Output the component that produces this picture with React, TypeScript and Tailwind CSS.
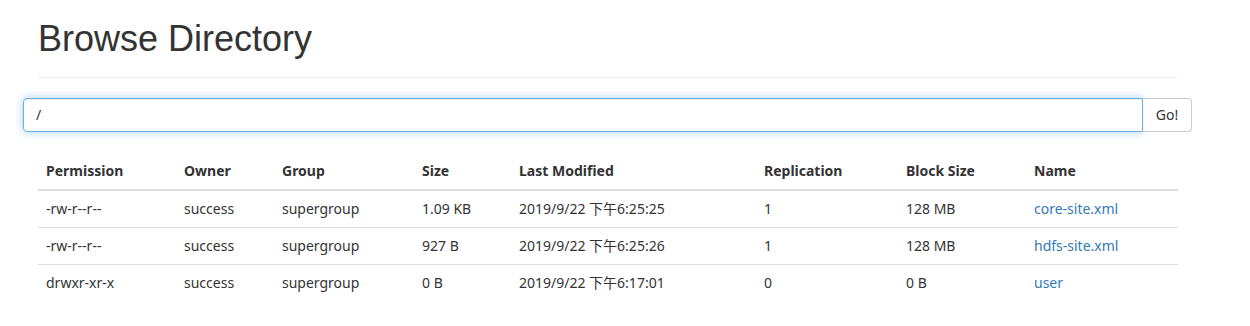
import React from "react";

const cols = [
  { h: "Permission", w: 138 },
  { h: "Owner", w: 98 },
  { h: "Group", w: 140 },
  { h: "Size", w: 97 },
  { h: "Last Modified", w: 245 },
  { h: "Replication", w: 142 },
  { h: "Block Size", w: 128 },
  { h: "Name", w: 152 },
];

const rows = [
  ["-rw-r--r--", "success", "supergroup", "1.09 KB", "2019/9/22 下午6:25:25", "1", "128 MB", "core-site.xml"],
  ["-rw-r--r--", "success", "supergroup", "927 B", "2019/9/22 下午6:25:26", "1", "128 MB", "hdfs-site.xml"],
  ["drwxr-xr-x", "success", "supergroup", "0 B", "2019/9/22 下午6:17:01", "0", "0 B", "user"],
];

const bodyFont = { fontFamily: '"Noto Sans", "Noto Sans CJK SC", sans-serif' };

export default function App() {
  return (
    <div className="w-[1250px] h-[326px] bg-white text-[#333] overflow-hidden" style={bodyFont}>
      <div className="pl-[23px] pr-[58px]">
        <div className="px-[15px]">
          <div className="pt-[19px] pb-[18px] border-b border-[#eee] mb-[20px]">
            <h1
              className="text-[36px] leading-[39.6px] font-normal text-[#333]"
              style={{ fontFamily: '"Liberation Sans", Arial, sans-serif' }}
            >
              Browse Directory
            </h1>
          </div>
        </div>
        <div className="flex h-[34px] w-[1169px]">
          <div className="flex-1 flex items-center border border-[#66afe9] rounded-l-[4px] pl-[12px] text-[14px] shadow-[inset_0_1px_1px_rgba(0,0,0,0.075),0_0_8px_rgba(102,175,233,0.6)]">
            /
          </div>
          <button className="w-[49px] h-[34px] border border-[#ccc] border-l-0 rounded-r-[4px] text-[14px] text-[#333] bg-white">
            Go!
          </button>
        </div>
        <div className="px-[15px] mt-[21px]">
          <table className="w-[1140px] table-fixed border-collapse text-[14px]">
            <colgroup>
              {cols.map((c) => (
                <col key={c.h} style={{ width: c.w }} />
              ))}
            </colgroup>
            <thead>
              <tr>
                {cols.map((c) => (
                  <th key={c.h} className="text-left font-bold px-[8px] pt-[8px] pb-[8px] leading-[20px] border-b-2 border-[#ddd]">
                    {c.h}
                  </th>
                ))}
              </tr>
            </thead>
            <tbody>
              {rows.map((r, i) => (
                <tr key={i}>
                  {r.map((v, j) => (
                    <td
                      key={j}
                      className={`px-[8px] py-[8px] leading-[20px] ${i > 0 ? "border-t border-[#ddd]" : ""} ${j === 7 ? "text-[#337ab7]" : ""}`}
                    >
                      {v}
                    </td>
                  ))}
                </tr>
              ))}
            </tbody>
          </table>
        </div>
      </div>
    </div>
  );
}
